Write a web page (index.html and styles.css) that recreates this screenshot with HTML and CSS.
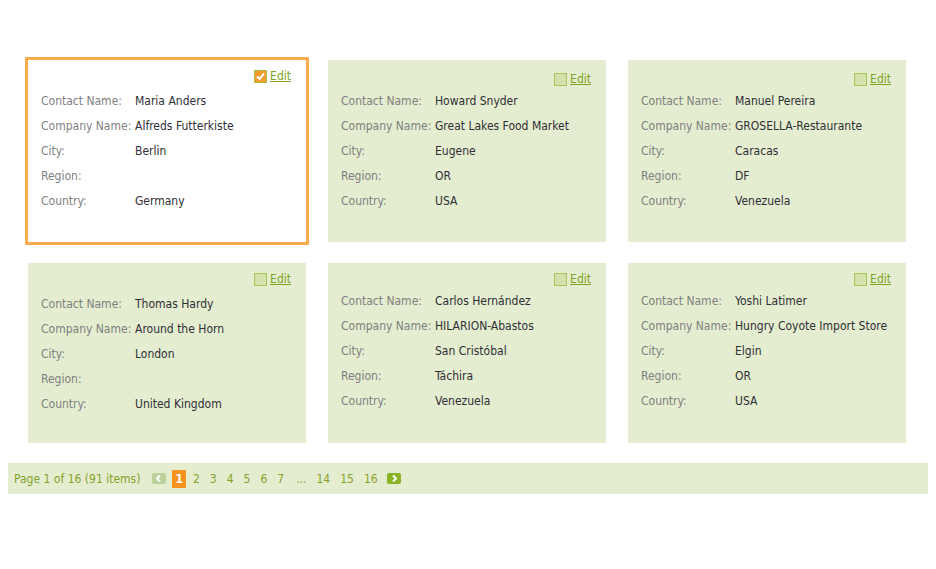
FILE: index.html
```html
<!DOCTYPE html>
<html>
<head>
<meta charset="utf-8">
<link rel="stylesheet" href="styles.css">
</head>
<body>
<div class="cards">
  <div class="card selected focused">
    <div class="card-head"><span class="chk checked"><svg viewBox="0 0 11 11" width="11" height="11"><path d="M2 5.5 L4.5 8 L9 2.5" fill="none" stroke="#fff" stroke-width="2"/></svg></span><a class="edit" href="#">Edit</a></div>
    <div class="fields">
      <span class="lbl">Contact Name:</span><span class="val">Maria Anders</span>
      <span class="lbl">Company Name:</span><span class="val">Alfreds Futterkiste</span>
      <span class="lbl">City:</span><span class="val">Berlin</span>
      <span class="lbl">Region:</span><span class="val"></span>
      <span class="lbl">Country:</span><span class="val">Germany</span>
    </div>
  </div>
  <div class="card top">
    <div class="card-head"><span class="chk"></span><a class="edit" href="#">Edit</a></div>
    <div class="fields">
      <span class="lbl">Contact Name:</span><span class="val">Howard Snyder</span>
      <span class="lbl">Company Name:</span><span class="val">Great Lakes Food Market</span>
      <span class="lbl">City:</span><span class="val">Eugene</span>
      <span class="lbl">Region:</span><span class="val">OR</span>
      <span class="lbl">Country:</span><span class="val">USA</span>
    </div>
  </div>
  <div class="card top">
    <div class="card-head"><span class="chk"></span><a class="edit" href="#">Edit</a></div>
    <div class="fields">
      <span class="lbl">Contact Name:</span><span class="val">Manuel Pereira</span>
      <span class="lbl">Company Name:</span><span class="val">GROSELLA-Restaurante</span>
      <span class="lbl">City:</span><span class="val">Caracas</span>
      <span class="lbl">Region:</span><span class="val">DF</span>
      <span class="lbl">Country:</span><span class="val">Venezuela</span>
    </div>
  </div>
  <div class="card focused">
    <div class="card-head"><span class="chk"></span><a class="edit" href="#">Edit</a></div>
    <div class="fields">
      <span class="lbl">Contact Name:</span><span class="val">Thomas Hardy</span>
      <span class="lbl">Company Name:</span><span class="val">Around the Horn</span>
      <span class="lbl">City:</span><span class="val">London</span>
      <span class="lbl">Region:</span><span class="val"></span>
      <span class="lbl">Country:</span><span class="val">United Kingdom</span>
    </div>
  </div>
  <div class="card">
    <div class="card-head"><span class="chk"></span><a class="edit" href="#">Edit</a></div>
    <div class="fields">
      <span class="lbl">Contact Name:</span><span class="val">Carlos Hernández</span>
      <span class="lbl">Company Name:</span><span class="val">HILARION-Abastos</span>
      <span class="lbl">City:</span><span class="val">San Cristóbal</span>
      <span class="lbl">Region:</span><span class="val">Táchira</span>
      <span class="lbl">Country:</span><span class="val">Venezuela</span>
    </div>
  </div>
  <div class="card">
    <div class="card-head"><span class="chk"></span><a class="edit" href="#">Edit</a></div>
    <div class="fields">
      <span class="lbl">Contact Name:</span><span class="val">Yoshi Latimer</span>
      <span class="lbl">Company Name:</span><span class="val">Hungry Coyote Import Store</span>
      <span class="lbl">City:</span><span class="val">Elgin</span>
      <span class="lbl">Region:</span><span class="val">OR</span>
      <span class="lbl">Country:</span><span class="val">USA</span>
    </div>
  </div>
</div>
<div class="pager">
  <span class="summary">Page 1 of 16 (91 items)</span>
  <span class="nav prev"><svg viewBox="0 0 14 11" width="14" height="11"><path d="M8 2.5 L5 5.5 L8 8.5" fill="none" stroke="#fff" stroke-width="2"/></svg></span>
  <span class="pg current">1</span>
  <a class="pg" href="#">2</a>
  <a class="pg" href="#">3</a>
  <a class="pg" href="#">4</a>
  <a class="pg" href="#">5</a>
  <a class="pg" href="#">6</a>
  <a class="pg" href="#">7</a>
  <span class="pg dots">...</span>
  <a class="pg" href="#">14</a>
  <a class="pg" href="#">15</a>
  <a class="pg" href="#">16</a>
  <a class="nav next" href="#"><svg viewBox="0 0 14 11" width="14" height="11"><path d="M6 2.5 L9 5.5 L6 8.5" fill="none" stroke="#fff" stroke-width="2"/></svg></a>
</div>
</body>
</html>
```
FILE: styles.css
```css
body {
  margin: 8px;
  background: #fff;
  font-family: "DejaVu Sans", sans-serif;
  font-stretch: condensed;
  font-size: 12px;
}

.cards {
  display: grid;
  grid-template-columns: repeat(3, 278px);
  grid-template-rows: 182px 180px;
  column-gap: 22px;
  row-gap: 21px;
  padding: 52px 0 0 20px;
}

.card {
  background: #e4edd0;
  padding: 8px 15px 0 13px;
}

.card.top {
  padding-top: 11px;
}

.card.selected {
  background: #fff;
  outline: 3px solid #f9ab4f;
}

.card-head {
  display: flex;
  justify-content: flex-end;
  align-items: center;
  height: 16px;
}

.chk {
  box-sizing: border-box;
  width: 13px;
  height: 13px;
  border: 1px solid #a6c655;
  background: #d5e1ac;
  margin-right: 3px;
  display: flex;
}

.chk.checked {
  background: #f39b2c;
  border-color: #a2c33a;
}

.edit {
  color: #7ea31f;
  text-decoration: underline;
  line-height: 16px;
}

.fields {
  display: grid;
  grid-template-columns: 94px 1fr;
  grid-auto-rows: 25px;
  align-items: center;
  margin-top: 1px;
}

.card.focused .fields {
  margin-top: 4px;
}

.lbl {
  color: #7f7f7f;
  white-space: nowrap;
}

.val {
  color: #2f2f36;
  white-space: nowrap;
}

.pager {
  margin-top: 20px;
  height: 31px;
  background: #e4edd0;
  display: flex;
  align-items: center;
  padding-left: 6px;
  color: #87a229;
}

.summary {
  margin-right: 12px;
}

.pg {
  color: #87a229;
  text-decoration: none;
  padding: 0 3px;
  margin-right: 4px;
  line-height: 18px;
}

.pg.current {
  background: #f7931e;
  color: #fff;
  font-weight: bold;
  margin-left: 2px;
}

.pg.dots {
  margin: 0 4px 0 2px;
}

.nav {
  display: flex;
  width: 14px;
  height: 11px;
  border-radius: 2px;
}

.nav.prev {
  background: #bcd29a;
  margin-right: 4px;
}

.nav.next {
  background: #8ab425;
  margin-left: 2px;
}
```
